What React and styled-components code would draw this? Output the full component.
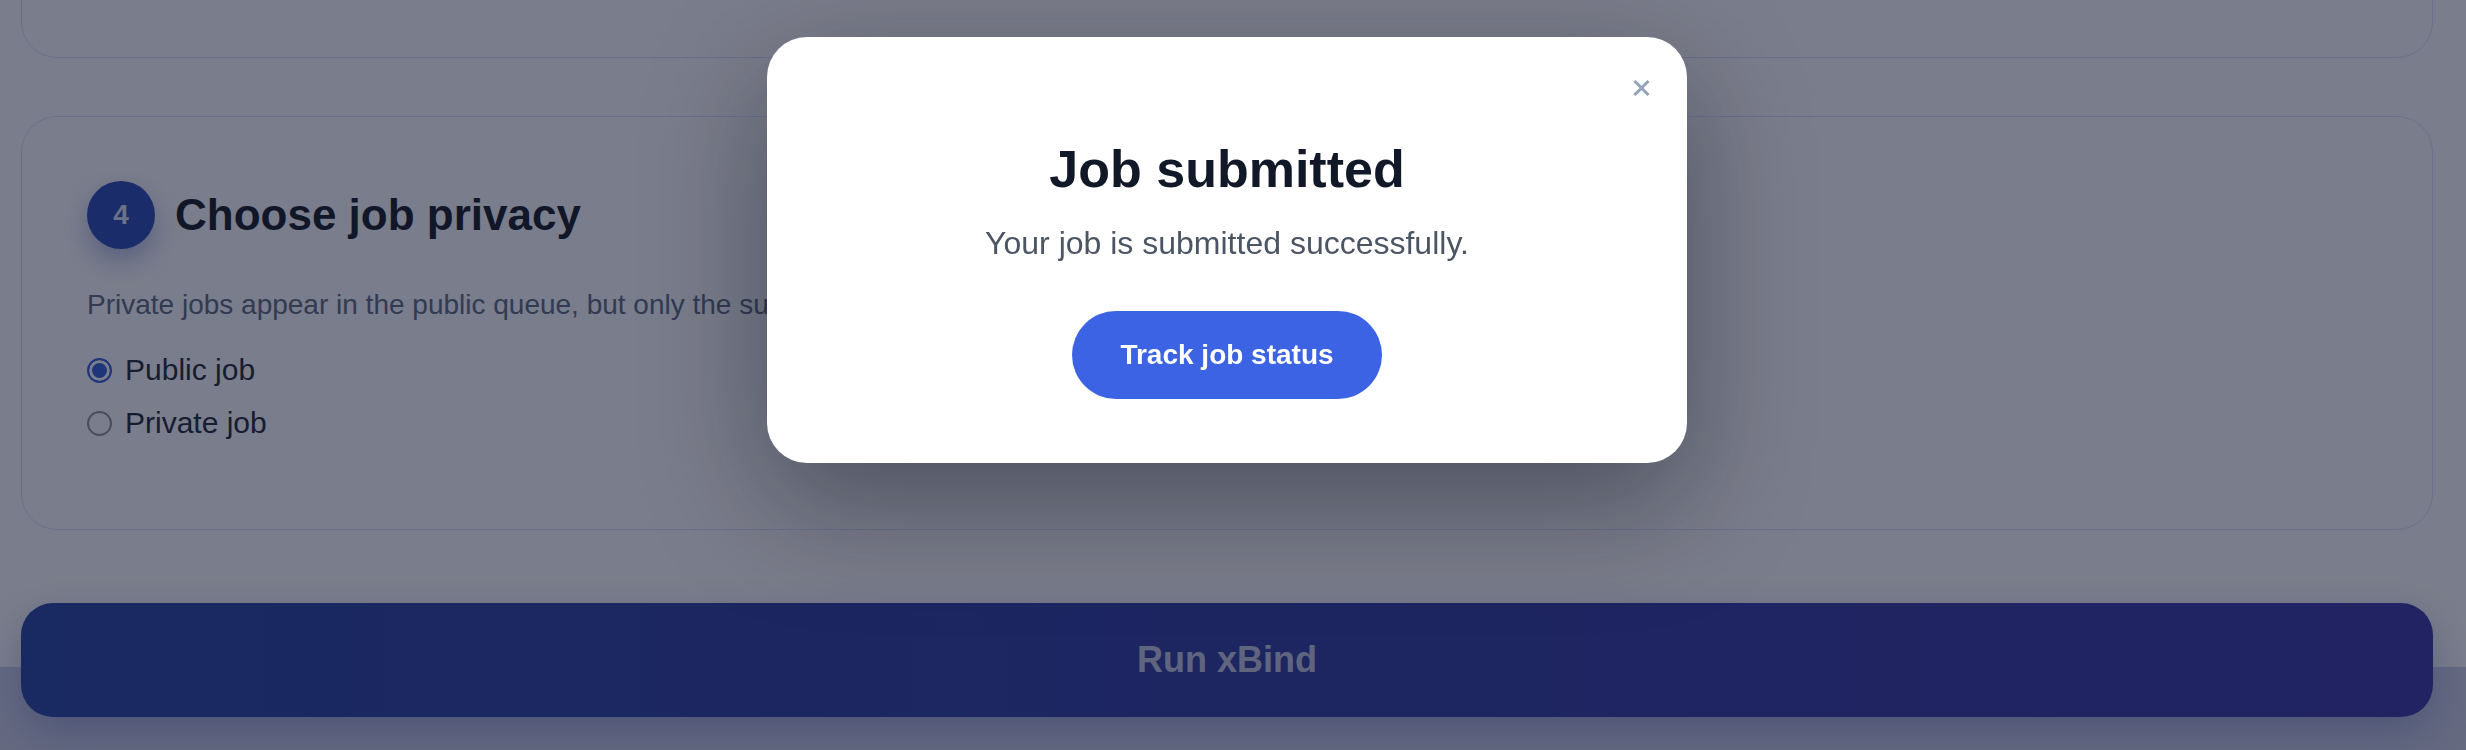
import React, { useState } from "react";
import styled, { createGlobalStyle } from "styled-components";

const GlobalStyle = createGlobalStyle`
  html, body { margin: 0; padding: 0; }
  body {
    font-family: "Liberation Sans", Arial, Helvetica, sans-serif;
    background: #f7f6fa;
    overflow: hidden;
  }
  * { box-sizing: border-box; }
`;

const Page = styled.div`
  min-height: 100vh;
  display: flex;
  flex-direction: column;
  background: #f7f6fa;
`;

const Main = styled.main`
  display: flex;
  flex-direction: column;
  gap: 58px;
  padding: 0 33px 0 21px;
`;

const Card = styled.section`
  border: 1px solid #d3daf7;
  border-radius: 36px;
  background: transparent;
  padding: ${(p) => (p.$compact ? "0" : "64px 64px 86px 65px")};
  height: ${(p) => (p.$height ? `${p.$height}px` : "auto")};
  margin-top: ${(p) => (p.$scrolled ? `-${p.$scrolled}px` : "0")};
`;

const StepHeader = styled.div`
  display: flex;
  align-items: center;
  gap: 20px;
  height: 68px;
`;

const StepBadge = styled.div`
  width: 68px;
  height: 68px;
  border-radius: 50%;
  background: #2244b2;
  color: rgba(255, 255, 255, 0.82);
  font-size: 28px;
  font-weight: 700;
  display: flex;
  align-items: center;
  justify-content: center;
  box-shadow: 0 12px 26px rgba(34, 68, 178, 0.35);
  flex: none;
`;

const StepTitle = styled.h2`
  margin: 0;
  font-size: 44px;
  line-height: 52px;
  font-weight: 700;
  color: #0f1422;
`;

const Description = styled.p`
  margin: 36px 0 0;
  font-size: 28px;
  line-height: 40px;
  color: #55647e;
`;

const RadioList = styled.div`
  display: flex;
  flex-direction: column;
  gap: 13px;
  margin-top: 25px;
`;

const RadioRow = styled.label`
  display: flex;
  align-items: center;
  gap: 13px;
  height: 40px;
  font-size: 30px;
  line-height: 40px;
  color: #1a2233;
  cursor: pointer;
`;

const RadioInput = styled.input`
  appearance: none;
  margin: 0;
  width: 25px;
  height: 25px;
  border-radius: 50%;
  border: 2px solid #8a8f99;
  background: transparent;
  flex: none;
  &:checked {
    border: 2px solid #2b58d6;
    background: #2b58d6;
    box-shadow: inset 0 0 0 3px #f7f6fa;
  }
`;

const ActionBar = styled.footer`
  margin-top: auto;
  padding: 0 33px 33px 21px;
  background: linear-gradient(to bottom, transparent 64px, #c8cce4 64px);
`;

const RunButton = styled.button`
  display: block;
  width: 100%;
  height: 114px;
  border: none;
  border-radius: 32px;
  background: linear-gradient(90deg, #213d9e 0%, #33309f 100%);
  box-shadow: 0 16px 40px rgba(33, 61, 158, 0.3);
  color: rgba(255, 255, 255, 0.7);
  font-family: inherit;
  font-size: 36px;
  font-weight: 700;
  line-height: 40px;
  cursor: pointer;
`;

const Overlay = styled.div`
  position: fixed;
  inset: 0;
  background: rgba(20, 26, 48, 0.55);
  display: flex;
  justify-content: center;
  align-items: flex-start;
  padding: 37px 33px 0 21px;
`;

const Modal = styled.div`
  position: relative;
  width: 920px;
  background: #ffffff;
  border-radius: 40px;
  padding: 102px 64px 64px;
  display: flex;
  flex-direction: column;
  align-items: center;
  text-align: center;
  box-shadow: 0 40px 120px rgba(10, 15, 30, 0.4);
`;

const CloseButton = styled.button`
  position: absolute;
  top: 31px;
  right: 26px;
  width: 40px;
  height: 40px;
  border: none;
  background: none;
  padding: 0;
  display: flex;
  align-items: center;
  justify-content: center;
  cursor: pointer;
`;

const ModalTitle = styled.h1`
  margin: 0;
  font-size: 52px;
  line-height: 60px;
  font-weight: 700;
  color: #111827;
`;

const ModalText = styled.p`
  margin: 26px 0 0;
  font-size: 32px;
  line-height: 37px;
  color: #4b5563;
`;

const PrimaryButton = styled.button`
  margin-top: 49px;
  padding: 28px 48px;
  border: none;
  border-radius: 999px;
  background: #3b63e4;
  color: #ffffff;
  font-family: inherit;
  font-size: 28px;
  line-height: 32px;
  font-weight: 700;
  cursor: pointer;
`;

const CloseIcon = () => (
  <svg width="17" height="16" viewBox="0 0 17 16" aria-hidden="true">
    <path d="M1.5 1 L15.5 15 M15.5 1 L1.5 15" stroke="#94a3b8" strokeWidth="3" fill="none" />
  </svg>
);

export default function App() {
  const [privacy, setPrivacy] = useState("public");
  return (
    <>
      <GlobalStyle />
      <Page>
        <Main>
          <Card $compact $height={200} $scrolled={142} />
          <Card>
            <StepHeader>
              <StepBadge>4</StepBadge>
              <StepTitle>Choose job privacy</StepTitle>
            </StepHeader>
            <Description>
              Private jobs appear in the public queue, but only the submitter can view their inputs and results.
            </Description>
            <RadioList>
              <RadioRow>
                <RadioInput
                  type="radio"
                  name="privacy"
                  checked={privacy === "public"}
                  onChange={() => setPrivacy("public")}
                />
                Public job
              </RadioRow>
              <RadioRow>
                <RadioInput
                  type="radio"
                  name="privacy"
                  checked={privacy === "private"}
                  onChange={() => setPrivacy("private")}
                />
                Private job
              </RadioRow>
            </RadioList>
          </Card>
        </Main>
        <ActionBar>
          <RunButton>Run xBind</RunButton>
        </ActionBar>
      </Page>
      <Overlay>
        <Modal role="dialog">
          <CloseButton aria-label="Close">
            <CloseIcon />
          </CloseButton>
          <ModalTitle>Job submitted</ModalTitle>
          <ModalText>Your job is submitted successfully.</ModalText>
          <PrimaryButton>Track job status</PrimaryButton>
        </Modal>
      </Overlay>
    </>
  );
}
